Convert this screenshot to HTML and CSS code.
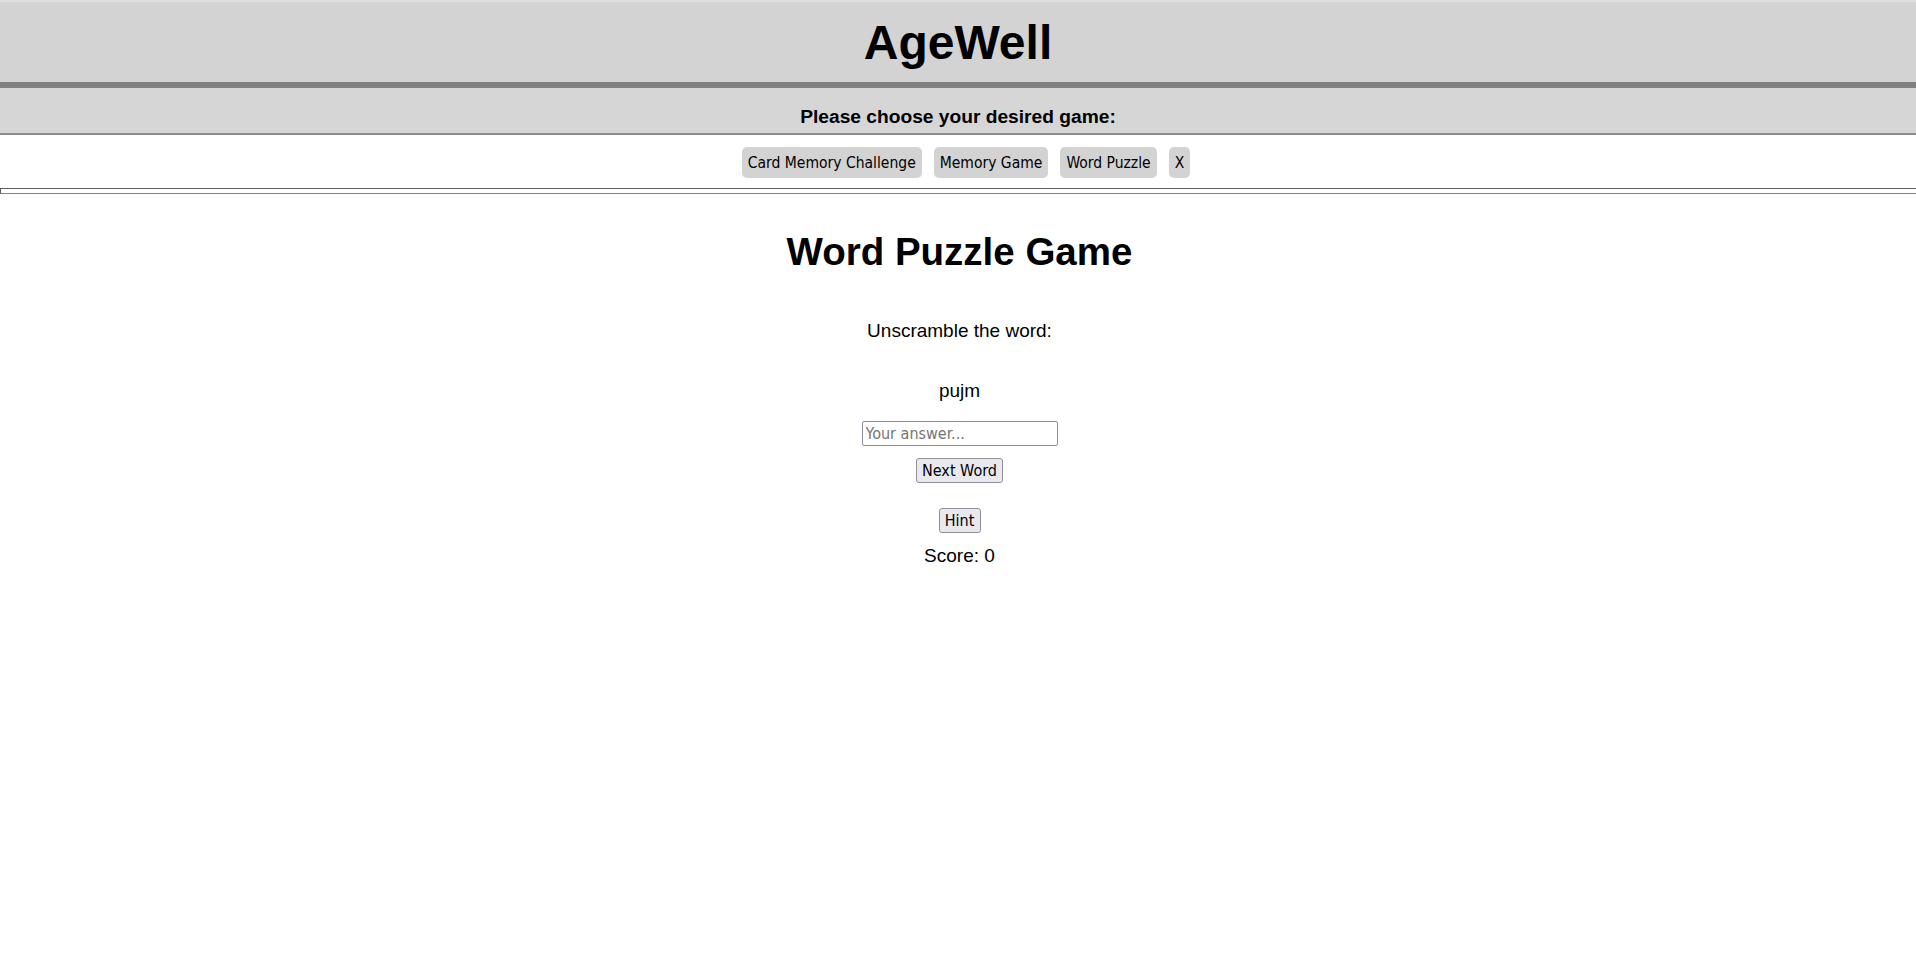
FILE: index.html
```html
<!DOCTYPE html>
<html lang="en">
<head>
<meta charset="utf-8">
<title>AgeWell</title>
<link rel="stylesheet" href="styles.css">
</head>
<body>
<header class="top">
  <h1 class="brand">AgeWell</h1>
</header>
<div class="divider"></div>
<div class="prompt">Please choose your desired game:</div>
<nav class="games">
  <button class="game-btn">Card Memory Challenge</button>
  <button class="game-btn">Memory Game</button>
  <button class="game-btn">Word Puzzle</button>
  <button class="game-btn">X</button>
</nav>
<div class="rule"></div>
<main class="game">
  <h2 class="game-title">Word Puzzle Game</h2>
  <p class="instr">Unscramble the word:</p>
  <p class="scrambled">pujm</p>
  <input class="answer" type="text" placeholder="Your answer...">
  <button class="btn next">Next Word</button>
  <button class="btn hint">Hint</button>
  <p class="score">Score: 0</p>
</main>
</body>
</html>
```

FILE: styles.css
```css
html, body {
  margin: 0;
  padding: 0;
  background: #ffffff;
  font-family: "Liberation Sans", Arial, sans-serif;
  color: #000;
}

.top {
  background: #d3d3d3;
  border-top: 2px solid #dedede;
  height: 80px;
  display: flex;
  align-items: center;
  justify-content: center;
}

.brand {
  margin: 0;
  font-size: 48px;
  font-weight: bold;
  line-height: 56px;
  padding-top: 2px;
}

.divider {
  height: 6px;
  background: #808080;
}

.prompt {
  background: #d6d6d6;
  font-size: 19.2px;
  font-weight: bold;
  line-height: 22px;
  text-align: center;
  padding: 18px 0 5px;
  border-bottom: 2px solid #8c8c8c;
}

.games {
  display: flex;
  justify-content: center;
  gap: 12px;
  padding: 12px 0 10px 16px;
}

.game-btn {
  background: #d3d3d3;
  border: none;
  border-radius: 5px;
  height: 31px;
  padding: 0 6px;
  font-family: "DejaVu Sans Condensed", "DejaVu Sans", sans-serif;
  font-size: 15.5px;
  color: #000;
}

.rule {
  height: 4px;
  border-top: 1px solid #5c5c5c;
  border-left: 1px solid #5c5c5c;
  border-bottom: 1px solid #858585;
}

.game {
  display: flex;
  flex-direction: column;
  align-items: center;
  padding-left: 3px;
}

.game-title {
  margin: 35px 0 0;
  font-size: 38.5px;
  line-height: 46px;
  font-weight: bold;
}

.instr {
  margin: 45px 0 0;
  font-size: 19px;
  line-height: 22px;
}

.scrambled {
  margin: 38px 0 0;
  font-size: 19px;
  line-height: 22px;
}

.answer {
  margin-top: 19px;
  width: 196px;
  height: 25px;
  box-sizing: border-box;
  border: 1px solid #8f8f9d;
  border-radius: 2px;
  padding: 0 3px;
  font-family: "DejaVu Sans Condensed", "DejaVu Sans", sans-serif;
  font-size: 16px;
}

.answer::placeholder {
  color: #757575;
}

.btn {
  background: #e9e9ed;
  border: 1px solid #8f8f9d;
  border-radius: 3px;
  height: 25px;
  box-sizing: border-box;
  padding: 0 4px;
  font-family: "DejaVu Sans Condensed", "DejaVu Sans", sans-serif;
  font-size: 16px;
  color: #000;
}

.next {
  margin-top: 12px;
  width: 87px;
}

.hint {
  margin-top: 25px;
  width: 42px;
}

.score {
  margin: 12px 0 0;
  font-size: 19px;
  line-height: 22px;
}
```
